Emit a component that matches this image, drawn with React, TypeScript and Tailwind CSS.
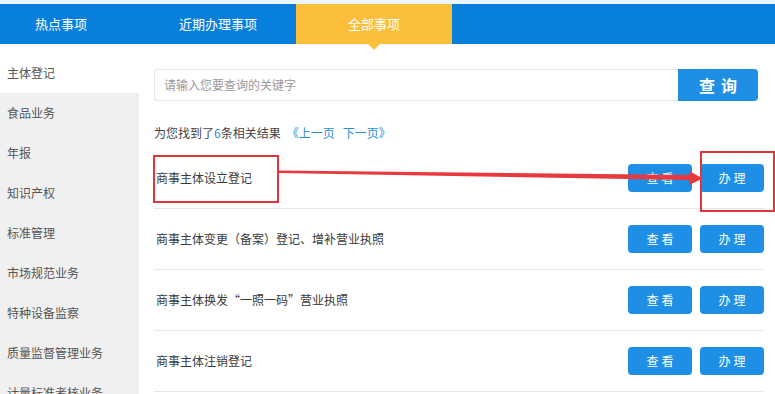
import * as React from "react";

const tabs = [
  { label: "热点事项", cls: "w-[122px]" },
  { label: "近期办理事项", cls: "ml-[18px] w-[156px]" },
  { label: "全部事项", cls: "w-[156px]", active: true },
];

const sideItems = [
  "主体登记",
  "食品业务",
  "年报",
  "知识产权",
  "标准管理",
  "市场规范业务",
  "特种设备监察",
  "质量监督管理业务",
  "计量标准考核业务",
];

const rows = [
  "商事主体设立登记",
  "商事主体变更（备案）登记、增补营业执照",
  "商事主体换发“一照一码”营业执照",
  "商事主体注销登记",
];

const RowButton = ({ label }: { label: string }) => (
  <button className="w-[64px] h-[28px] rounded-[4px] bg-[#1f8fe5] text-white text-[12px] tracking-[3px] pl-[3px]">
    {label}
  </button>
);

export default function App() {
  return (
    <div
      className="relative w-[775px] h-[394px] overflow-hidden bg-white"
      style={{ fontFamily: '"Noto Sans CJK SC", "Noto Sans", sans-serif' }}
    >
      {/* top strip */}
      <div className="h-[4px] bg-[#eaf5fc]" />

      {/* tab bar */}
      <div className="relative flex h-[40px] bg-[#0880db]">
        {tabs.map((t) => (
          <div
            key={t.label}
            className={`relative flex items-center justify-center text-[13px] text-white ${t.cls} ${
              t.active ? "bg-[#fbbf3b]" : ""
            }`}
          >
            {t.label}
            {t.active && (
              <span className="absolute left-1/2 -bottom-[6px] -translate-x-1/2 w-0 h-0 border-l-[6px] border-r-[6px] border-t-[6px] border-l-transparent border-r-transparent border-t-[#fbbf3b]" />
            )}
          </div>
        ))}
      </div>

      <div className="flex">
        {/* sidebar */}
        <div className="w-[139px] pt-[9px] shrink-0">
          {sideItems.map((s, i) => (
            <div
              key={s}
              className={`h-[40px] flex items-center pl-[7px] text-[12px] text-[#555] ${
                i === 0 ? "bg-white" : "bg-[#f0f0f0]"
              }`}
            >
              {s}
            </div>
          ))}
        </div>

        {/* main */}
        <div className="flex-1 pl-[15px]">
          <div className="mt-[25px] flex h-[32px] w-[604px]">
            <div className="flex-1 flex items-center pl-[9px] border border-[#e6e6e6] border-r-0 rounded-l-[3px] text-[12px] text-[#999]">
              请输入您要查询的关键字
            </div>
            <button className="w-[80px] h-[32px] rounded-r-[4px] bg-[#1f8fe5] text-white text-[16px] font-bold tracking-[6px] pl-[6px]">
              查询
            </button>
          </div>

          <div className="mt-[22px] h-[20px] leading-[20px] text-[12px] text-[#444] flex">
            <span>
              为您找到了<span className="text-[#2a8fd6]">6</span>条相关结果
            </span>
            <span className="ml-[6px] text-[#2a8fd6]">《上一页</span>
            <span className="ml-[8px] text-[#2a8fd6]">下一页》</span>
          </div>

          <div className="mt-[5px] w-[611px]">
            {rows.map((r) => (
              <div
                key={r}
                className="h-[61px] flex items-center justify-between border-b border-[#e8e8e8] pl-[2px] pr-[1px]"
              >
                <span className="text-[12px] text-[#3a3a3a]">{r}</span>
                <div className="flex gap-[8px]">
                  <RowButton label="查看" />
                  <RowButton label="办理" />
                </div>
              </div>
            ))}
          </div>
        </div>
      </div>

      {/* red annotations */}
      <div className="absolute left-[153px] top-[155px] w-[126px] h-[48px] border-2 border-[#e2353b]" />
      <div className="absolute left-[700px] top-[151px] w-[75px] h-[61px] border-2 border-[#e2353b]" />
      <svg className="absolute left-0 top-0" width="775" height="394">
        <polygon points="279,170.5 690,175 690,180 279,173" fill="#e83a3e" />
        <polygon points="689,171 703,178.5 689,185" fill="#e83a3e" />
      </svg>
    </div>
  );
}
